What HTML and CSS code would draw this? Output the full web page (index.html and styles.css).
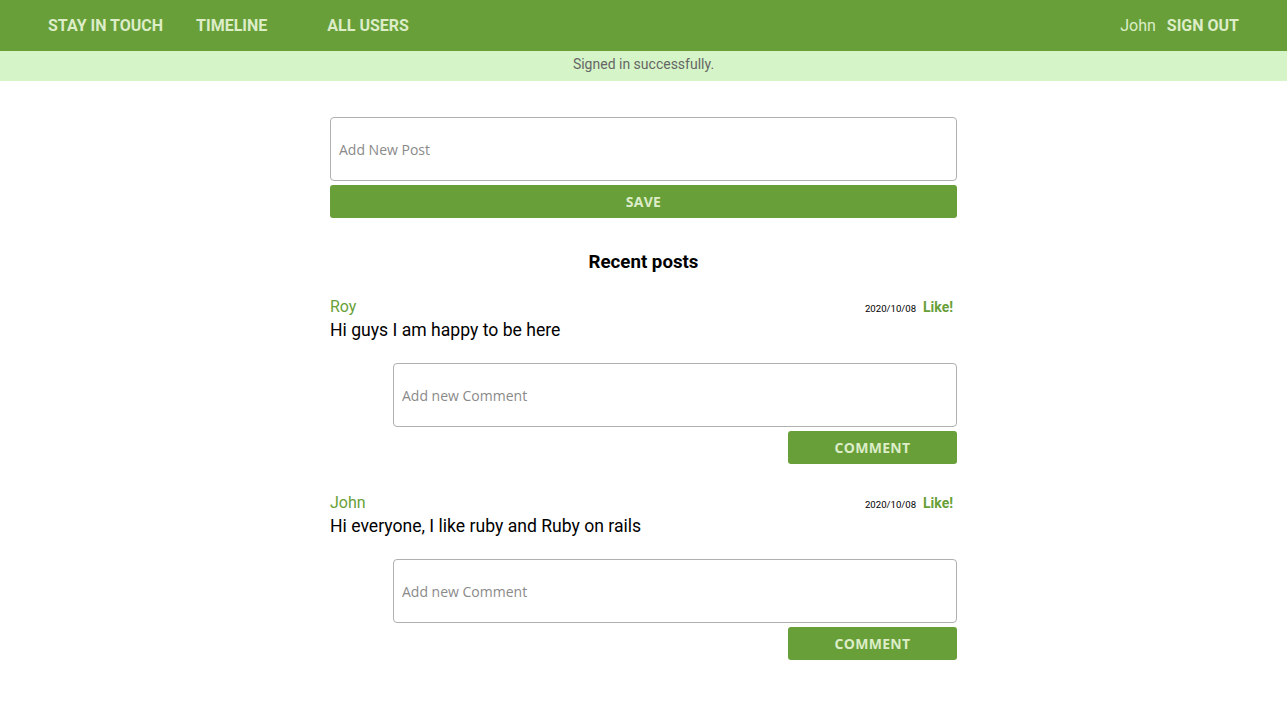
FILE: index.html
```html
<!DOCTYPE html>
<html>
<head>
<meta charset="utf-8">
<link rel="stylesheet" href="styles.css">
</head>
<body>
<nav class="nav">
  <div class="nav-left">
    <a class="nav-link brand" href="#">STAY IN TOUCH</a>
    <a class="nav-link timeline" href="#">TIMELINE</a>
    <a class="nav-link" href="#">ALL USERS</a>
  </div>
  <div class="nav-right">
    <span class="nav-user">John</span>
    <a class="nav-link" href="#">SIGN OUT</a>
  </div>
</nav>
<div class="flash">Signed in successfully.</div>
<main class="main">
  <form class="post-form">
    <input class="field" type="text" placeholder="Add New Post">
    <button class="btn btn-full" type="button">SAVE</button>
  </form>
  <h2 class="heading">Recent posts</h2>
  <div class="post">
    <div class="post-head">
      <span class="author">Roy</span>
      <span class="meta"><span class="date">2020/10/08</span><a class="like" href="#">Like!</a></span>
    </div>
    <p class="post-text">Hi guys I am happy to be here</p>
    <form class="comment-form">
      <input class="field" type="text" placeholder="Add new Comment">
      <button class="btn btn-comment" type="button">COMMENT</button>
    </form>
  </div>
  <div class="post">
    <div class="post-head">
      <span class="author">John</span>
      <span class="meta"><span class="date">2020/10/08</span><a class="like" href="#">Like!</a></span>
    </div>
    <p class="post-text">Hi everyone, I like ruby and Ruby on rails</p>
    <form class="comment-form">
      <input class="field" type="text" placeholder="Add new Comment">
      <button class="btn btn-comment" type="button">COMMENT</button>
    </form>
  </div>
</main>
</body>
</html>
```
FILE: styles.css
```css
* { box-sizing: border-box; }
body {
  margin: 0;
  font-family: Roboto, "Liberation Sans", sans-serif;
  background: #fff;
  color: #000;
}
.nav {
  height: 51px;
  background: #689f38;
  display: flex;
  align-items: center;
  justify-content: space-between;
  padding: 0 48px;
}
.nav-left, .nav-right { display: flex; align-items: center; }
.nav-link {
  color: #dcedc8;
  font-weight: 700;
  font-size: 16px;
  text-decoration: none;
}
.nav-left .brand { margin-right: 33px; }
.nav-left .timeline { margin-right: 60px; }
.nav-user {
  color: #dcedc8;
  font-size: 16px;
  margin-right: 11px;
}
.flash {
  height: 30px;
  background: #d5f5c8;
  color: #666;
  font-size: 14px;
  text-align: center;
  line-height: 26px;
}
.main {
  width: 627px;
  margin: 36px auto 0;
}
.post-form { display: flex; flex-direction: column; }
.field {
  display: block;
  width: 100%;
  height: 64px;
  border: 1px solid #b0b0b0;
  border-radius: 4px;
  padding: 0 8px;
  font-family: "Open Sans", "DejaVu Sans", sans-serif;
  font-size: 14px;
  color: #333;
  outline: none;
}
.field::placeholder { color: #8a8a8a; }
.btn {
  height: 33px;
  margin-top: 4px;
  background: #689f38;
  border: none;
  border-radius: 3px;
  color: #dcedc8;
  font-family: "Open Sans", "DejaVu Sans", sans-serif;
  font-weight: 700;
  font-size: 14px;
  letter-spacing: 0.3px;
  cursor: pointer;
}
.btn-full { width: 100%; }
.heading {
  margin: 33px 0 0;
  font-size: 18.7px;
  font-weight: 700;
  text-align: center;
  line-height: 22px;
}
.post { margin-top: 23px; }
.post + .post { margin-top: 28px; }
.post-head {
  display: flex;
  justify-content: space-between;
  align-items: baseline;
  height: 22px;
}
.author {
  color: #689f38;
  font-size: 16px;
  line-height: 22px;
}
.meta { display: flex; align-items: baseline; padding-right: 4px; }
.date { font-size: 9.6px; margin-right: 7px; }
.like {
  color: #689f38;
  font-weight: 700;
  font-size: 14px;
  text-decoration: none;
}
.post-text {
  margin: 0;
  padding-top: 1px;
  font-size: 17.6px;
  line-height: 23px;
}
.comment-form {
  margin-top: 21px;
  margin-left: 63px;
  display: flex;
  flex-direction: column;
  align-items: flex-end;
}
.btn-comment { width: 169px; }
```
